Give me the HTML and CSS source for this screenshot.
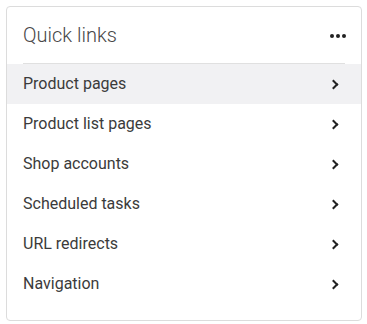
FILE: index.html
```html
<!DOCTYPE html>
<html lang="en">

<head>
    <meta charset="UTF-8">
    <meta name="viewport" content="width=device-width, initial-scale=1.0">
    <title>Quick links</title>
    <link rel="stylesheet" href="styles.css">
</head>

<body>
    <div class="card">
        <div class="card-header">
            <h2>Quick links</h2>
            <button class="more" type="button" aria-label="More">
                <svg width="18" height="6" viewBox="0 0 18 6">
                    <circle cx="3" cy="3" r="2" />
                    <circle cx="9" cy="3" r="2" />
                    <circle cx="15" cy="3" r="2" />
                </svg>
            </button>
        </div>
        <ul class="links">
            <li class="active"><a href="#">Product pages<span class="chevron"></span></a></li>
            <li><a href="#">Product list pages<span class="chevron"></span></a></li>
            <li><a href="#">Shop accounts<span class="chevron"></span></a></li>
            <li><a href="#">Scheduled tasks<span class="chevron"></span></a></li>
            <li><a href="#">URL redirects<span class="chevron"></span></a></li>
            <li><a href="#">Navigation<span class="chevron"></span></a></li>
        </ul>
    </div>
</body>

</html>
```

FILE: styles.css
```css
* {
    margin: 0;
    padding: 0;
    box-sizing: border-box;
}

body {
    font-family: Roboto, "Liberation Sans", sans-serif;
    background: #fff;
    padding: 6px 5px 0 6px;
}

.card {
    width: 356px;
    height: 315px;
    border: 1px solid #dcdcdc;
    border-radius: 4px;
    background: #fff;
}

.card-header {
    display: flex;
    align-items: center;
    justify-content: space-between;
    height: 57px;
    margin: 0 16px;
    border-bottom: 1px solid #e0e0e0;
}

.card-header h2 {
    font-size: 20px;
    font-weight: 300;
    color: #474747;
}

.more {
    border: none;
    background: none;
    display: flex;
    fill: #222;
    margin-right: -2px;
    margin-top: 1px;
}

.links {
    list-style: none;
}

.links li a {
    display: flex;
    align-items: center;
    justify-content: space-between;
    height: 40px;
    padding: 0 24px 1px 16px;
    font-size: 16px;
    color: #3b3b3b;
    text-decoration: none;
}

.links li.active a {
    background: #f1f1f3;
}

.chevron {
    width: 7px;
    height: 7px;
    border-top: 2px solid #222;
    border-right: 2px solid #222;
    transform: rotate(45deg);
    margin-top: 2px;
}
```
